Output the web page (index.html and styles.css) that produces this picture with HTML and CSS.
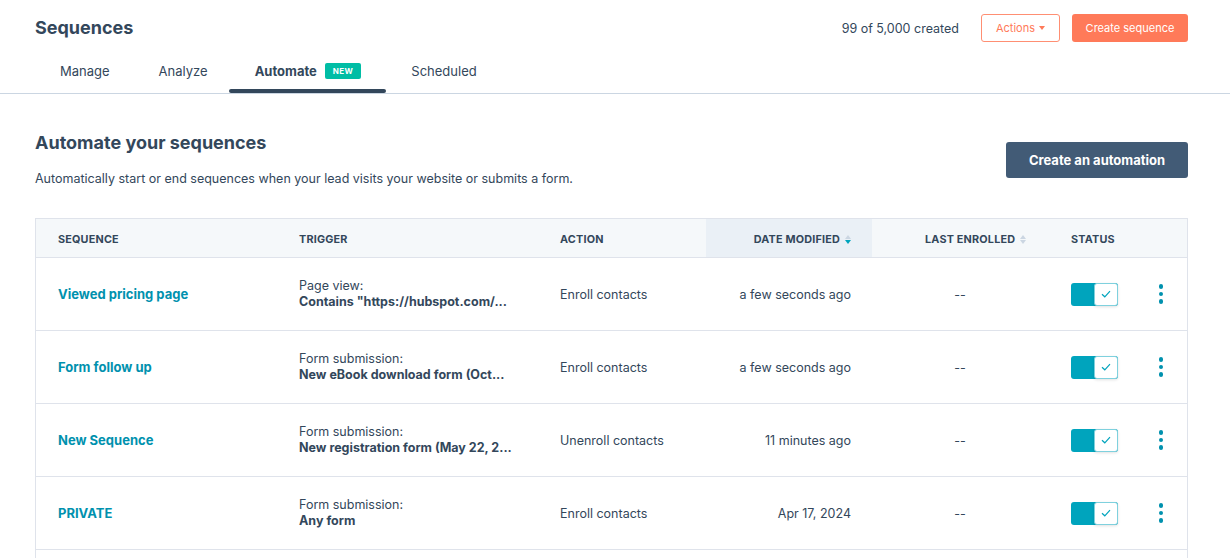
FILE: index.html
```html
<!DOCTYPE html>
<html lang="en">
<head>
<meta charset="utf-8">
<title>Sequences</title>
<link rel="stylesheet" href="styles.css">
</head>
<body>
<header class="page-head">
  <div class="top">
    <h1 class="title">Sequences</h1>
    <div class="top-actions">
      <span class="count">99 of 5,000 created</span>
      <button class="btn btn-outline">Actions <span class="caret"></span></button>
      <button class="btn btn-primary">Create sequence</button>
    </div>
  </div>
  <nav class="tabs">
    <a class="tab tab-manage">Manage</a>
    <a class="tab tab-analyze">Analyze</a>
    <a class="tab active">Automate <span class="badge">NEW</span></a>
    <a class="tab tab-scheduled">Scheduled</a>
  </nav>
</header>

<main class="content">
  <div class="section-head">
    <div>
      <h2 class="section-title">Automate your sequences</h2>
      <p class="section-desc">Automatically start or end sequences when your lead visits your website or submits a form.</p>
    </div>
    <button class="btn btn-dark">Create an automation</button>
  </div>

  <div class="table">
    <div class="row head">
      <div class="cell">SEQUENCE</div>
      <div class="cell">TRIGGER</div>
      <div class="cell">ACTION</div>
      <div class="cell right sorted">DATE MODIFIED <span class="sort active-down"></span></div>
      <div class="cell enrolled-head">LAST ENROLLED <span class="sort"></span></div>
      <div class="cell">STATUS</div>
    </div>

    <div class="row">
      <div class="cell name">Viewed pricing page</div>
      <div class="cell trigger"><span>Page view:</span><strong>Contains "https://hubspot.com/...</strong></div>
      <div class="cell">Enroll contacts</div>
      <div class="cell right">a few seconds ago</div>
      <div class="cell center">--</div>
      <div class="cell status"><span class="toggle"><span class="knob"><svg width="10" height="8" viewBox="0 0 10 8"><path d="M1 4.2 L3.8 6.8 L9 1.2" fill="none" stroke="#00a4bd" stroke-width="1.2"/></svg></span></span><span class="dots"><i></i><i></i><i></i></span></div>
    </div>

    <div class="row">
      <div class="cell name">Form follow up</div>
      <div class="cell trigger"><span>Form submission:</span><strong>New eBook download form (Oct...</strong></div>
      <div class="cell">Enroll contacts</div>
      <div class="cell right">a few seconds ago</div>
      <div class="cell center">--</div>
      <div class="cell status"><span class="toggle"><span class="knob"><svg width="10" height="8" viewBox="0 0 10 8"><path d="M1 4.2 L3.8 6.8 L9 1.2" fill="none" stroke="#00a4bd" stroke-width="1.2"/></svg></span></span><span class="dots"><i></i><i></i><i></i></span></div>
    </div>

    <div class="row">
      <div class="cell name">New Sequence</div>
      <div class="cell trigger"><span>Form submission:</span><strong>New registration form (May 22, 2...</strong></div>
      <div class="cell">Unenroll contacts</div>
      <div class="cell right">11 minutes ago</div>
      <div class="cell center">--</div>
      <div class="cell status"><span class="toggle"><span class="knob"><svg width="10" height="8" viewBox="0 0 10 8"><path d="M1 4.2 L3.8 6.8 L9 1.2" fill="none" stroke="#00a4bd" stroke-width="1.2"/></svg></span></span><span class="dots"><i></i><i></i><i></i></span></div>
    </div>

    <div class="row">
      <div class="cell name">PRIVATE</div>
      <div class="cell trigger"><span>Form submission:</span><strong>Any form</strong></div>
      <div class="cell">Enroll contacts</div>
      <div class="cell right">Apr 17, 2024</div>
      <div class="cell center">--</div>
      <div class="cell status"><span class="toggle"><span class="knob"><svg width="10" height="8" viewBox="0 0 10 8"><path d="M1 4.2 L3.8 6.8 L9 1.2" fill="none" stroke="#00a4bd" stroke-width="1.2"/></svg></span></span><span class="dots"><i></i><i></i><i></i></span></div>
    </div>

    <div class="row">
      <div class="cell name"></div>
      <div class="cell"></div>
      <div class="cell"></div>
      <div class="cell"></div>
      <div class="cell"></div>
      <div class="cell"></div>
    </div>
  </div>
</main>
</body>
</html>
```

FILE: styles.css
```css
* { box-sizing: border-box; }
html, body { margin: 0; padding: 0; background: #fff; overflow: hidden; }
body {
  font-family: "Inter", "Noto Sans", sans-serif;
  color: #33475b;
  font-size: 13px;
  width: 1230px;
  height: 558px;
}
button { font-family: inherit; cursor: pointer; }

.page-head { border-bottom: 1px solid #cbd6e2; }
.top {
  display: flex;
  justify-content: space-between;
  align-items: center;
  padding: 14px 42px 0 35px;
  height: 42px;
}
.title { margin: 0; font-size: 18px; font-weight: 700; line-height: 28px; color: #33475b; }
.top-actions { display: flex; align-items: center; }
.count { font-size: 12.5px; margin-right: 22px; }
.btn {
  height: 28px;
  border-radius: 3px;
  font-size: 11px;
  padding: 0 14px;
  border: 1px solid transparent;
}
.btn-outline {
  background: #fff;
  border-color: #ff8f73;
  color: #ff7a59;
  width: 79px;
  margin-right: 12px;
  display: inline-flex; align-items: center; justify-content: center; gap: 4px;
}
.caret {
  width: 0; height: 0;
  border-left: 3.5px solid transparent;
  border-right: 3.5px solid transparent;
  border-top: 4px solid #ff7a59;
}
.btn-primary { background: #ff7a59; color: #fff; width: 116px; padding: 0; }

.tabs { display: flex; padding-left: 34px; height: 51px; padding-top: 7px; }
.tab {
  position: relative;
  display: flex;
  align-items: center;
  padding: 0 25px;
  font-size: 13px;
  color: #33475b;
  height: 43px;
}
.tab-manage { padding: 0 24px 0 26px; }
.tab-analyze { padding: 0 21px 0 25px; }
.tab.active { font-weight: 700; padding: 0 25px 0 26px; }
.tab.active::after {
  content: "";
  position: absolute;
  left: 0; right: 0; bottom: -1px;
  height: 4px;
  border-radius: 2px;
  background: #33475b;
}
.badge {
  margin-left: 8px;
  background: #00bda5;
  color: #fff;
  font-size: 8px;
  font-weight: 700;
  letter-spacing: 0.4px;
  padding: 0 8px;
  height: 16px;
  line-height: 16px;
  border-radius: 2px;
}

.content { padding: 0 42px 0 35px; }
.section-head { display: flex; justify-content: space-between; align-items: flex-start; padding-top: 37px; }
.section-title { margin: 0; font-size: 18px; font-weight: 700; line-height: 24px; }
.section-desc { margin: 16px 0 0; font-size: 12.5px; line-height: 16px; }
.btn-dark {
  background: #425b76;
  color: #fff;
  font-weight: 700;
  font-size: 13px;
  height: 36px;
  width: 182px;
  margin-top: 11px;
}

.table {
  margin-top: 31px;
  border: 1px solid #dfe3eb;
  border-bottom: none;
  width: 1153px;
}
.row {
  display: grid;
  grid-template-columns: 240px 261px 169px 166px 176px 139px;
  height: 73px;
  border-bottom: 1px solid #dfe3eb;
}
.row.head { height: 39px; background: #f5f8fa; }
.cell {
  display: flex;
  align-items: center;
  padding: 0 23px;
  font-size: 12.5px;
  white-space: nowrap;
}
.head .cell { font-size: 10.8px; font-weight: 700; letter-spacing: 0.2px; padding-top: 3px; }
.cell:first-child { padding-left: 22px; }
.cell.right { justify-content: flex-end; padding-right: 21px; }
.cell.center { justify-content: center; padding: 0; }
.head .sorted { background: #eaf0f6; }
.head .enrolled-head { padding: 3px 0 0 53px; }
.sort {
  display: inline-flex;
  flex-direction: column;
  margin-left: 5px;
  gap: 1px;
}
.sort::before, .sort::after {
  content: "";
  width: 0; height: 0;
  border-left: 3.5px solid transparent;
  border-right: 3.5px solid transparent;
}
.sort::before { border-bottom: 4px solid #cbd6e2; }
.sort::after { border-top: 4px solid #cbd6e2; }
.sort.active-down::after { border-top-color: #00a4bd; }

.name { color: #0091ae; font-weight: 700; font-size: 13px; }
.trigger { flex-direction: column; align-items: flex-start; justify-content: center; line-height: 16px; }
.trigger strong { font-weight: 700; }

.status { justify-content: space-between; padding-right: 24px; }
.toggle {
  position: relative;
  width: 47px; height: 23px;
  background: #00a4bd;
  border-radius: 3px;
}
.knob {
  position: absolute;
  right: 0; top: 0;
  width: 24px; height: 23px;
  background: #fff;
  border: 1px solid #7fd1de;
  border-radius: 3px;
  box-shadow: 0 1px 3px rgba(0,0,0,0.12);
  display: flex; align-items: center; justify-content: center;
}
.dots { display: flex; flex-direction: column; gap: 3px; }
.dots i { display: block; width: 4.5px; height: 4.5px; border-radius: 50%; background: #0091ae; }
```
